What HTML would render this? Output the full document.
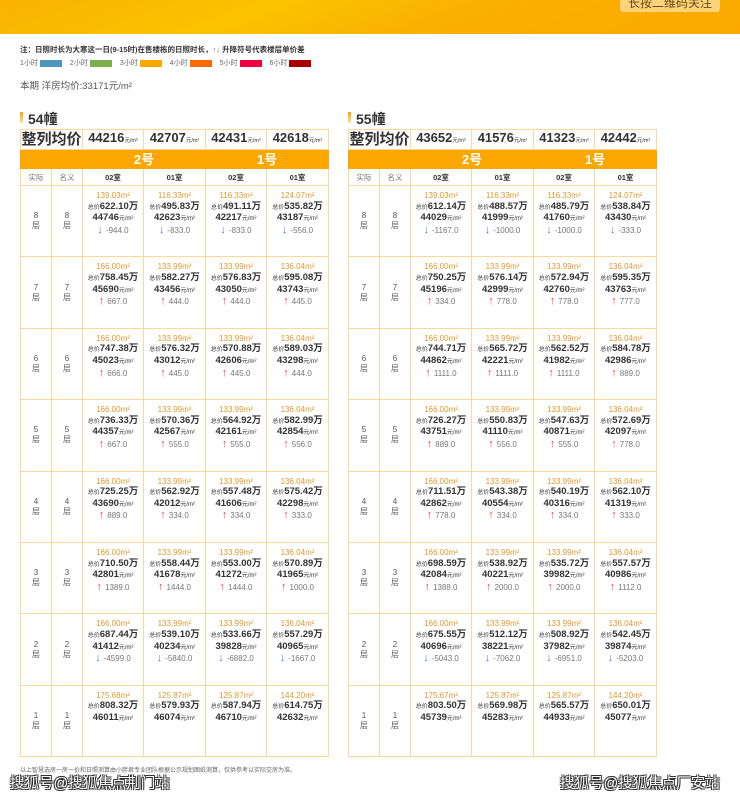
<!DOCTYPE html>
<html><head><meta charset="utf-8"><style>
*{margin:0;padding:0;box-sizing:border-box}
body{width:740px;height:797px;overflow:hidden;background:#fff;font-family:"Liberation Sans","Noto Sans CJK SC",sans-serif;position:relative;color:#333}
.ban{position:absolute;left:0;top:0;width:740px;height:34px;background:linear-gradient(160deg,#f9b200 0%,#fbc300 35%,#f9b000 60%,#fca800 100%)}
.btn{position:absolute;left:620px;top:-4px;width:100px;height:16px;background:#fcd27a;border-radius:3px;font-size:12px;color:#6a4a10;text-align:center;line-height:14px}
.note{position:absolute;left:20px;top:44px;font-size:7.5px;font-weight:bold;color:#333}
.leg{position:absolute;left:20px;top:58px;font-size:7px;color:#666;display:flex;align-items:center}
.leg span{display:inline-block;width:22px;height:7px;margin:0 8px 0 2px}
.avg{position:absolute;left:20px;top:78px;font-size:9.5px;color:#555}
.tt{position:absolute;top:109px;font-size:14px;font-weight:bold;color:#333}
.tt:before{content:"";position:absolute;left:-8px;top:3px;width:3px;height:11px;background:linear-gradient(#fca600,#ffe0a0)}
table{position:absolute;top:129px;border-collapse:collapse;table-layout:fixed;width:308px}
td{border:1px solid #fcd99a;text-align:center;padding:0;vertical-align:top;overflow:hidden}
.h td{height:17px;line-height:15px;vertical-align:middle;font-size:13px;font-weight:bold;color:#333;white-space:nowrap}
.h td small{font-size:5.5px;font-weight:normal}
.h td.z{font-size:15px}
.o td{height:19px;line-height:17px;background:#fca600;color:#fff;font-size:13px;font-weight:bold;vertical-align:middle;border-color:#fca600}
.s td{height:17px;line-height:15px;vertical-align:middle;font-size:7.5px;font-weight:bold;color:#333}
.s td.g{font-weight:normal;color:#777}
.r td{height:71.4px;padding-top:5px;line-height:10.6px}
.r td.f{vertical-align:middle;padding-top:0;font-size:8px;color:#555;line-height:10px}
.a{font-size:8px;color:#e09a30}
.p{font-size:9.5px;font-weight:bold;color:#333;white-space:nowrap}
.p small{font-size:6px;font-weight:normal}
.d{font-size:8px;color:#777}
.up:before{content:"\2191";color:#f04848;font-weight:bold;font-size:11px;margin-right:3px}
.dn:before{content:"\2193";color:#4a7ce8;font-weight:bold;font-size:11px;margin-right:3px}
.foot{position:absolute;left:20px;top:765px;font-size:6px;color:#666;white-space:nowrap}
.wm{position:absolute;top:772px;font-size:14.5px;color:#fff;white-space:nowrap;text-shadow:-1px -1px 0 #333,1px -1px 0 #333,-1px 1px 0 #333,1px 1px 0 #333}
</style></head><body>
<div class="ban"><div class="btn">长按二维码关注</div></div>
<div class="note">注：日照时长为大寒这一日(9-15时)在售楼栋的日照时长，<span style="color:#f04848">↑</span><span style="color:#4a7ce8">↓</span> 升降符号代表楼层单价差</div>
<div class="leg">1小时<span style="background:#4d97bd"></span>2小时<span style="background:#7bb04a"></span>3小时<span style="background:#fca800"></span>4小时<span style="background:#fc6a00"></span>5小时<span style="background:#f00040"></span>6小时<span style="background:#a80000"></span></div>
<div class="avg">本期 洋房均价:33171元/m²</div>

<div class="tt" style="left:28px">54幢</div>
<table style="left:20px">
<colgroup><col style="width:31px"><col style="width:31px"><col style="width:61px"><col style="width:62px"><col style="width:61px"><col style="width:62px"></colgroup>
<tr class="h"><td colspan="2" class="z">整列均价</td><td>44216<small>元/m²</small></td><td>42707<small>元/m²</small></td><td>42431<small>元/m²</small></td><td>42618<small>元/m²</small></td></tr>
<tr class="o"><td></td><td></td><td colspan="2">2号</td><td colspan="2">1号</td></tr>
<tr class="s"><td class="g">实际</td><td class="g">名义</td><td>02室</td><td>01室</td><td>02室</td><td>01室</td></tr>
<tr class="r"><td class="f">8<br>层</td><td class="f">8<br>层</td>
<td><div class="a">139.03m²</div><div class="p"><small>总价</small>622.10万</div><div class="p">44746<small>元/m²</small></div><div class="d dn">-944.0</div></td>
<td><div class="a">116.33m²</div><div class="p"><small>总价</small>495.83万</div><div class="p">42623<small>元/m²</small></div><div class="d dn">-833.0</div></td>
<td><div class="a">116.33m²</div><div class="p"><small>总价</small>491.11万</div><div class="p">42217<small>元/m²</small></div><div class="d dn">-833.0</div></td>
<td><div class="a">124.07m²</div><div class="p"><small>总价</small>535.82万</div><div class="p">43187<small>元/m²</small></div><div class="d dn">-556.0</div></td></tr>
<tr class="r"><td class="f">7<br>层</td><td class="f">7<br>层</td>
<td><div class="a">166.00m²</div><div class="p"><small>总价</small>758.45万</div><div class="p">45690<small>元/m²</small></div><div class="d up">667.0</div></td>
<td><div class="a">133.99m²</div><div class="p"><small>总价</small>582.27万</div><div class="p">43456<small>元/m²</small></div><div class="d up">444.0</div></td>
<td><div class="a">133.99m²</div><div class="p"><small>总价</small>576.83万</div><div class="p">43050<small>元/m²</small></div><div class="d up">444.0</div></td>
<td><div class="a">136.04m²</div><div class="p"><small>总价</small>595.08万</div><div class="p">43743<small>元/m²</small></div><div class="d up">445.0</div></td></tr>
<tr class="r"><td class="f">6<br>层</td><td class="f">6<br>层</td>
<td><div class="a">166.00m²</div><div class="p"><small>总价</small>747.38万</div><div class="p">45023<small>元/m²</small></div><div class="d up">666.0</div></td>
<td><div class="a">133.99m²</div><div class="p"><small>总价</small>576.32万</div><div class="p">43012<small>元/m²</small></div><div class="d up">445.0</div></td>
<td><div class="a">133.99m²</div><div class="p"><small>总价</small>570.88万</div><div class="p">42606<small>元/m²</small></div><div class="d up">445.0</div></td>
<td><div class="a">136.04m²</div><div class="p"><small>总价</small>589.03万</div><div class="p">43298<small>元/m²</small></div><div class="d up">444.0</div></td></tr>
<tr class="r"><td class="f">5<br>层</td><td class="f">5<br>层</td>
<td><div class="a">166.00m²</div><div class="p"><small>总价</small>736.33万</div><div class="p">44357<small>元/m²</small></div><div class="d up">667.0</div></td>
<td><div class="a">133.99m²</div><div class="p"><small>总价</small>570.36万</div><div class="p">42567<small>元/m²</small></div><div class="d up">555.0</div></td>
<td><div class="a">133.99m²</div><div class="p"><small>总价</small>564.92万</div><div class="p">42161<small>元/m²</small></div><div class="d up">555.0</div></td>
<td><div class="a">136.04m²</div><div class="p"><small>总价</small>582.99万</div><div class="p">42854<small>元/m²</small></div><div class="d up">556.0</div></td></tr>
<tr class="r"><td class="f">4<br>层</td><td class="f">4<br>层</td>
<td><div class="a">166.00m²</div><div class="p"><small>总价</small>725.25万</div><div class="p">43690<small>元/m²</small></div><div class="d up">889.0</div></td>
<td><div class="a">133.99m²</div><div class="p"><small>总价</small>562.92万</div><div class="p">42012<small>元/m²</small></div><div class="d up">334.0</div></td>
<td><div class="a">133.99m²</div><div class="p"><small>总价</small>557.48万</div><div class="p">41606<small>元/m²</small></div><div class="d up">334.0</div></td>
<td><div class="a">136.04m²</div><div class="p"><small>总价</small>575.42万</div><div class="p">42298<small>元/m²</small></div><div class="d up">333.0</div></td></tr>
<tr class="r"><td class="f">3<br>层</td><td class="f">3<br>层</td>
<td><div class="a">166.00m²</div><div class="p"><small>总价</small>710.50万</div><div class="p">42801<small>元/m²</small></div><div class="d up">1389.0</div></td>
<td><div class="a">133.99m²</div><div class="p"><small>总价</small>558.44万</div><div class="p">41678<small>元/m²</small></div><div class="d up">1444.0</div></td>
<td><div class="a">133.99m²</div><div class="p"><small>总价</small>553.00万</div><div class="p">41272<small>元/m²</small></div><div class="d up">1444.0</div></td>
<td><div class="a">136.04m²</div><div class="p"><small>总价</small>570.89万</div><div class="p">41965<small>元/m²</small></div><div class="d up">1000.0</div></td></tr>
<tr class="r"><td class="f">2<br>层</td><td class="f">2<br>层</td>
<td><div class="a">166.00m²</div><div class="p"><small>总价</small>687.44万</div><div class="p">41412<small>元/m²</small></div><div class="d dn">-4599.0</div></td>
<td><div class="a">133.99m²</div><div class="p"><small>总价</small>539.10万</div><div class="p">40234<small>元/m²</small></div><div class="d dn">-5840.0</div></td>
<td><div class="a">133.99m²</div><div class="p"><small>总价</small>533.66万</div><div class="p">39828<small>元/m²</small></div><div class="d dn">-6882.0</div></td>
<td><div class="a">136.04m²</div><div class="p"><small>总价</small>557.29万</div><div class="p">40965<small>元/m²</small></div><div class="d dn">-1667.0</div></td></tr>
<tr class="r"><td class="f">1<br>层</td><td class="f">1<br>层</td>
<td><div class="a">175.68m²</div><div class="p"><small>总价</small>808.32万</div><div class="p">46011<small>元/m²</small></div></td>
<td><div class="a">125.87m²</div><div class="p"><small>总价</small>579.93万</div><div class="p">46074<small>元/m²</small></div></td>
<td><div class="a">125.87m²</div><div class="p"><small>总价</small>587.94万</div><div class="p">46710<small>元/m²</small></div></td>
<td><div class="a">144.20m²</div><div class="p"><small>总价</small>614.75万</div><div class="p">42632<small>元/m²</small></div></td></tr>
</table>

<div class="tt" style="left:356px">55幢</div>
<table style="left:348px">
<colgroup><col style="width:31px"><col style="width:31px"><col style="width:61px"><col style="width:62px"><col style="width:61px"><col style="width:62px"></colgroup>
<tr class="h"><td colspan="2" class="z">整列均价</td><td>43652<small>元/m²</small></td><td>41576<small>元/m²</small></td><td>41323<small>元/m²</small></td><td>42442<small>元/m²</small></td></tr>
<tr class="o"><td></td><td></td><td colspan="2">2号</td><td colspan="2">1号</td></tr>
<tr class="s"><td class="g">实际</td><td class="g">名义</td><td>02室</td><td>01室</td><td>02室</td><td>01室</td></tr>
<tr class="r"><td class="f">8<br>层</td><td class="f">8<br>层</td>
<td><div class="a">139.03m²</div><div class="p"><small>总价</small>612.14万</div><div class="p">44029<small>元/m²</small></div><div class="d dn">-1167.0</div></td>
<td><div class="a">116.33m²</div><div class="p"><small>总价</small>488.57万</div><div class="p">41999<small>元/m²</small></div><div class="d dn">-1000.0</div></td>
<td><div class="a">116.33m²</div><div class="p"><small>总价</small>485.79万</div><div class="p">41760<small>元/m²</small></div><div class="d dn">-1000.0</div></td>
<td><div class="a">124.07m²</div><div class="p"><small>总价</small>538.84万</div><div class="p">43430<small>元/m²</small></div><div class="d dn">-333.0</div></td></tr>
<tr class="r"><td class="f">7<br>层</td><td class="f">7<br>层</td>
<td><div class="a">166.00m²</div><div class="p"><small>总价</small>750.25万</div><div class="p">45196<small>元/m²</small></div><div class="d up">334.0</div></td>
<td><div class="a">133.99m²</div><div class="p"><small>总价</small>576.14万</div><div class="p">42999<small>元/m²</small></div><div class="d up">778.0</div></td>
<td><div class="a">133.99m²</div><div class="p"><small>总价</small>572.94万</div><div class="p">42760<small>元/m²</small></div><div class="d up">778.0</div></td>
<td><div class="a">136.04m²</div><div class="p"><small>总价</small>595.35万</div><div class="p">43763<small>元/m²</small></div><div class="d up">777.0</div></td></tr>
<tr class="r"><td class="f">6<br>层</td><td class="f">6<br>层</td>
<td><div class="a">166.00m²</div><div class="p"><small>总价</small>744.71万</div><div class="p">44862<small>元/m²</small></div><div class="d up">1111.0</div></td>
<td><div class="a">133.99m²</div><div class="p"><small>总价</small>565.72万</div><div class="p">42221<small>元/m²</small></div><div class="d up">1111.0</div></td>
<td><div class="a">133.99m²</div><div class="p"><small>总价</small>562.52万</div><div class="p">41982<small>元/m²</small></div><div class="d up">1111.0</div></td>
<td><div class="a">136.04m²</div><div class="p"><small>总价</small>584.78万</div><div class="p">42986<small>元/m²</small></div><div class="d up">889.0</div></td></tr>
<tr class="r"><td class="f">5<br>层</td><td class="f">5<br>层</td>
<td><div class="a">166.00m²</div><div class="p"><small>总价</small>726.27万</div><div class="p">43751<small>元/m²</small></div><div class="d up">889.0</div></td>
<td><div class="a">133.99m²</div><div class="p"><small>总价</small>550.83万</div><div class="p">41110<small>元/m²</small></div><div class="d up">556.0</div></td>
<td><div class="a">133.99m²</div><div class="p"><small>总价</small>547.63万</div><div class="p">40871<small>元/m²</small></div><div class="d up">555.0</div></td>
<td><div class="a">136.04m²</div><div class="p"><small>总价</small>572.69万</div><div class="p">42097<small>元/m²</small></div><div class="d up">778.0</div></td></tr>
<tr class="r"><td class="f">4<br>层</td><td class="f">4<br>层</td>
<td><div class="a">166.00m²</div><div class="p"><small>总价</small>711.51万</div><div class="p">42862<small>元/m²</small></div><div class="d up">778.0</div></td>
<td><div class="a">133.99m²</div><div class="p"><small>总价</small>543.38万</div><div class="p">40554<small>元/m²</small></div><div class="d up">334.0</div></td>
<td><div class="a">133.99m²</div><div class="p"><small>总价</small>540.19万</div><div class="p">40316<small>元/m²</small></div><div class="d up">334.0</div></td>
<td><div class="a">136.04m²</div><div class="p"><small>总价</small>562.10万</div><div class="p">41319<small>元/m²</small></div><div class="d up">333.0</div></td></tr>
<tr class="r"><td class="f">3<br>层</td><td class="f">3<br>层</td>
<td><div class="a">166.00m²</div><div class="p"><small>总价</small>698.59万</div><div class="p">42084<small>元/m²</small></div><div class="d up">1388.0</div></td>
<td><div class="a">133.99m²</div><div class="p"><small>总价</small>538.92万</div><div class="p">40221<small>元/m²</small></div><div class="d up">2000.0</div></td>
<td><div class="a">133.99m²</div><div class="p"><small>总价</small>535.72万</div><div class="p">39982<small>元/m²</small></div><div class="d up">2000.0</div></td>
<td><div class="a">136.04m²</div><div class="p"><small>总价</small>557.57万</div><div class="p">40986<small>元/m²</small></div><div class="d up">1112.0</div></td></tr>
<tr class="r"><td class="f">2<br>层</td><td class="f">2<br>层</td>
<td><div class="a">166.00m²</div><div class="p"><small>总价</small>675.55万</div><div class="p">40696<small>元/m²</small></div><div class="d dn">-5043.0</div></td>
<td><div class="a">133.99m²</div><div class="p"><small>总价</small>512.12万</div><div class="p">38221<small>元/m²</small></div><div class="d dn">-7062.0</div></td>
<td><div class="a">133.99m²</div><div class="p"><small>总价</small>508.92万</div><div class="p">37982<small>元/m²</small></div><div class="d dn">-6951.0</div></td>
<td><div class="a">136.04m²</div><div class="p"><small>总价</small>542.45万</div><div class="p">39874<small>元/m²</small></div><div class="d dn">-5203.0</div></td></tr>
<tr class="r"><td class="f">1<br>层</td><td class="f">1<br>层</td>
<td><div class="a">175.67m²</div><div class="p"><small>总价</small>803.50万</div><div class="p">45739<small>元/m²</small></div></td>
<td><div class="a">125.87m²</div><div class="p"><small>总价</small>569.98万</div><div class="p">45283<small>元/m²</small></div></td>
<td><div class="a">125.87m²</div><div class="p"><small>总价</small>565.57万</div><div class="p">44933<small>元/m²</small></div></td>
<td><div class="a">144.20m²</div><div class="p"><small>总价</small>650.01万</div><div class="p">45077<small>元/m²</small></div></td></tr>
</table>

<div class="foot">以上智慧选房一房一价和日照测算由小胖君专业团队根据公示规划图纸测算，仅供参考以实际交房为准。</div>
<div class="wm" style="left:10px">搜狐号@搜狐焦点荆门站</div>
<div class="wm" style="left:560px">搜狐号@搜狐焦点厂安站</div>
</body></html>
